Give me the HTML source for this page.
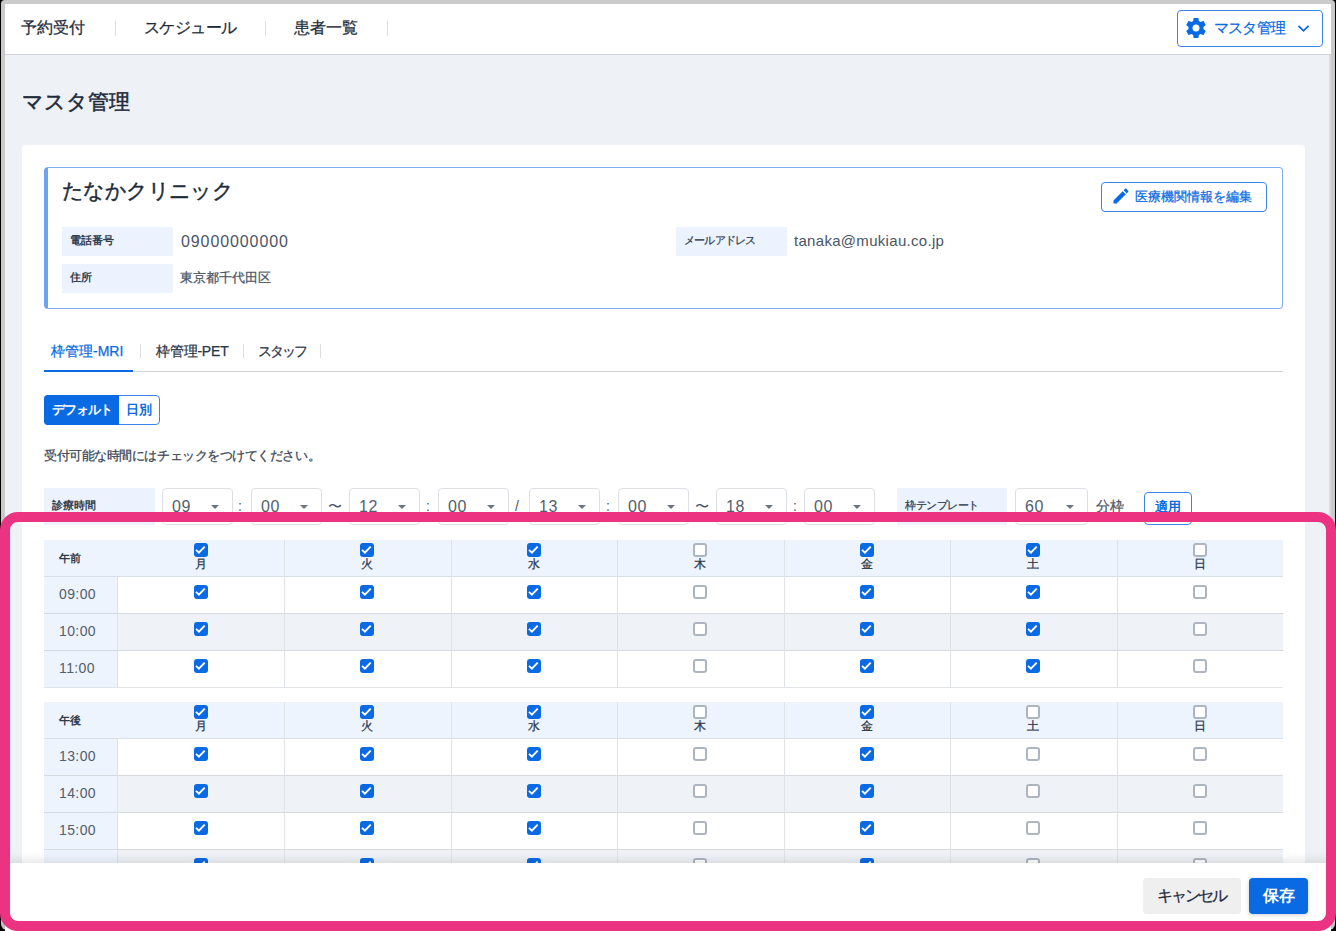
<!DOCTYPE html>
<html><head><meta charset="utf-8"><style>
*{box-sizing:border-box;margin:0;padding:0}
html,body{width:1336px;height:931px;overflow:hidden;background:#000;font-family:"Liberation Sans",sans-serif;color:#1e2b3b}
body{position:relative}
.a{position:absolute;white-space:nowrap}
.s{-webkit-text-stroke:0.25px currentColor}
.sel{position:absolute;top:488px;width:71px;height:37px;border:1px solid #dcdfe4;border-radius:4px;background:#fff}
.sel span{position:absolute;left:9px;top:8px;font-size:16px;line-height:20px;color:#535e6e;letter-spacing:0.5px}
.sel i{position:absolute;right:13px;top:16px;width:0;height:0;border-left:4px solid transparent;border-right:4px solid transparent;border-top:4.5px solid #6b7585}
.sym{top:496px;font-size:14px;line-height:20px;color:#4a5566}
.cb{position:absolute;width:14px;height:14px;border:2px solid #adb5c1;border-radius:3px;background:#fff}
.cb.on{background:#0a6ae3;border:none}
.cb svg{position:absolute;left:0;top:0}
.dl{font-size:12px;line-height:14px;font-weight:normal;color:#2f3b4b;width:12px;text-align:center;-webkit-text-stroke:0.3px currentColor}
.tm{font-size:14px;line-height:20px;color:#525d6d;letter-spacing:0.4px}
</style></head><body>
<div class="a" style="left:1px;top:0px;width:1334px;height:930px;background:#cacaca;border-radius:4px 4px 6px 6px"></div>
<div class="a" style="left:5px;top:4px;width:1324px;height:922px;background:#eef1f6;"></div>
<div class="a" style="left:1329px;top:55px;width:2px;height:875px;background:#dadada;"></div>
<div class="a" style="left:5px;top:4px;width:1326px;height:51px;background:#fff;border-bottom:1px solid #cfd2d6"></div>
<div class="a s" style="left:21px;top:17px;font-size:16px;line-height:22px;font-weight:normal;color:#1e2b3b;letter-spacing:0px;">予約受付</div>
<div class="a" style="left:115px;top:21px;width:1px;height:15px;background:#dedede;"></div>
<div class="a s" style="left:144px;top:17px;font-size:16px;line-height:22px;font-weight:normal;color:#1e2b3b;letter-spacing:-0.6px;">スケジュール</div>
<div class="a" style="left:265px;top:21px;width:1px;height:15px;background:#dedede;"></div>
<div class="a s" style="left:294px;top:17px;font-size:16px;line-height:22px;font-weight:normal;color:#1e2b3b;letter-spacing:0px;">患者一覧</div>
<div class="a" style="left:387px;top:21px;width:1px;height:15px;background:#dedede;"></div>
<div class="a" style="left:1177px;top:10px;width:146px;height:37px;background:#fff;border:1px solid #3d84ec;border-radius:4px"></div>
<svg class="a" style="left:1186px;top:18px" width="20" height="20" viewBox="2 2 20 20"><path fill="#0a6ae3" d="M12,15.5A3.5,3.5 0 0,1 8.5,12A3.5,3.5 0 0,1 12,8.5A3.5,3.5 0 0,1 15.5,12A3.5,3.5 0 0,1 12,15.5M19.43,12.97C19.47,12.65 19.5,12.33 19.5,12C19.5,11.67 19.47,11.34 19.43,11L21.54,9.37C21.73,9.22 21.78,8.95 21.66,8.73L19.66,5.27C19.54,5.05 19.27,4.96 19.05,5.05L16.56,6.05C16.04,5.66 15.5,5.32 14.87,5.07L14.5,2.42C14.46,2.18 14.25,2 14,2H10C9.75,2 9.54,2.18 9.5,2.42L9.13,5.07C8.5,5.32 7.96,5.66 7.44,6.05L4.95,5.05C4.73,4.96 4.46,5.05 4.34,5.27L2.34,8.73C2.21,8.95 2.27,9.22 2.46,9.37L4.57,11C4.53,11.34 4.5,11.67 4.5,12C4.5,12.33 4.53,12.65 4.57,12.97L2.46,14.63C2.27,14.78 2.21,15.05 2.34,15.27L4.34,18.73C4.46,18.95 4.73,19.03 4.95,18.95L7.44,17.94C7.96,18.34 8.5,18.68 9.13,18.93L9.5,21.58C9.54,21.82 9.75,22 10,22H14C14.25,22 14.46,21.82 14.5,21.58L14.87,18.93C15.5,18.67 16.04,18.34 16.56,17.94L19.05,18.95C19.27,19.03 19.54,18.95 19.66,18.73L21.66,15.27C21.78,15.05 21.73,14.78 21.54,14.63L19.43,12.97Z"/></svg>
<div class="a s" style="left:1214px;top:17px;font-size:15px;line-height:22px;font-weight:normal;color:#0a6ae3;letter-spacing:-0.8px;">マスタ管理</div>
<svg class="a" style="left:1297px;top:24px" width="13" height="9" viewBox="0 0 13 9"><path d="M1.5 1.8 L6.5 6.8 L11.5 1.8" fill="none" stroke="#0a6ae3" stroke-width="1.8"/></svg>
<div class="a s" style="left:22px;top:87px;font-size:21px;line-height:30px;font-weight:normal;color:#1e2b3b;letter-spacing:0px;-webkit-text-stroke:0.5px #1e2b3b">マスタ管理</div>
<div class="a" style="left:22px;top:145px;width:1283px;height:800px;background:#fff;border-radius:4px"></div>
<div class="a" style="left:44px;top:167px;width:1239px;height:142px;background:transparent;border:1px solid #7eadf0;border-left:4px solid #6ea3ee;border-radius:4px"></div>
<div class="a s" style="left:62px;top:176px;font-size:21px;line-height:30px;font-weight:normal;color:#1e2b3b;letter-spacing:-0.6px;-webkit-text-stroke:0.45px #1e2b3b">たなかクリニック</div>
<div class="a" style="left:1101px;top:182px;width:166px;height:30px;background:#fff;border:1px solid #3d84ec;border-radius:4px"></div>
<svg class="a" style="left:1111px;top:186px" width="20" height="20" viewBox="0 0 24 24"><path fill="#0a6ae3" d="M3 17.25V21h3.75L17.81 9.94l-3.75-3.75L3 17.25zM20.71 7.04c.39-.39.39-1.02 0-1.41l-2.34-2.34a.996.996 0 0 0-1.41 0l-1.83 1.83 3.75 3.75 1.83-1.83z"/></svg>
<div class="a s" style="left:1135px;top:187px;font-size:13px;line-height:20px;font-weight:normal;color:#0a6ae3;letter-spacing:0px;">医療機関情報を編集</div>
<div class="a" style="left:62px;top:227px;width:111px;height:29px;background:#ecf3fe;"></div>
<div class="a" style="left:70px;top:231px;font-size:11px;line-height:18px;font-weight:bold;color:#333f50;letter-spacing:0px;">電話番号</div>
<div class="a" style="left:181px;top:232px;font-size:16px;line-height:20px;font-weight:normal;color:#4a5566;letter-spacing:0.9px;">09000000000</div>
<div class="a" style="left:62px;top:264px;width:111px;height:29px;background:#ecf3fe;"></div>
<div class="a" style="left:70px;top:268px;font-size:11px;line-height:18px;font-weight:bold;color:#333f50;letter-spacing:0px;">住所</div>
<div class="a s" style="left:180px;top:268px;font-size:13px;line-height:20px;font-weight:normal;color:#4a5566;letter-spacing:0px;">東京都千代田区</div>
<div class="a" style="left:676px;top:227px;width:111px;height:29px;background:#ecf3fe;"></div>
<div class="a s" style="left:684px;top:231px;font-size:11px;line-height:18px;font-weight:normal;color:#333f50;letter-spacing:-0.8px;">メールアドレス</div>
<div class="a" style="left:794px;top:231px;font-size:15px;line-height:20px;font-weight:normal;color:#4a5566;letter-spacing:0.3px;">tanaka@mukiau.co.jp</div>
<div class="a s" style="left:51px;top:341px;font-size:14px;line-height:20px;font-weight:normal;color:#0a6ae3;letter-spacing:0px;">枠管理-MRI</div>
<div class="a" style="left:140px;top:344px;width:1px;height:14px;background:#dedede;"></div>
<div class="a s" style="left:156px;top:341px;font-size:14px;line-height:20px;font-weight:normal;color:#2a3646;letter-spacing:-0.2px;">枠管理-PET</div>
<div class="a" style="left:243px;top:344px;width:1px;height:14px;background:#dedede;"></div>
<div class="a s" style="left:258px;top:341px;font-size:14px;line-height:20px;font-weight:normal;color:#2a3646;letter-spacing:-2px;">スタッフ</div>
<div class="a" style="left:320px;top:344px;width:1px;height:14px;background:#dedede;"></div>
<div class="a" style="left:44px;top:371px;width:1239px;height:1px;background:#cfd3d8;"></div>
<div class="a" style="left:44px;top:370px;width:89px;height:2px;background:#0a6ae3;"></div>
<div class="a" style="left:44px;top:395px;width:116px;height:30px;background:#fff;border:1px solid #3d84ec;border-radius:4px"></div>
<div class="a" style="left:44px;top:395px;width:75px;height:30px;background:#0a6ae3;border-radius:4px 0 0 4px"></div>
<div class="a" style="left:52px;top:400px;font-size:13px;line-height:20px;font-weight:bold;color:#fff;letter-spacing:-1px;">デフォルト</div>
<div class="a" style="left:126px;top:400px;font-size:13px;line-height:20px;font-weight:bold;color:#0a6ae3;letter-spacing:0px;">日別</div>
<div class="a s" style="left:44px;top:446px;font-size:13px;line-height:20px;font-weight:normal;color:#3a4656;letter-spacing:-0.45px;">受付可能な時間にはチェックをつけてください。</div>
<div class="a" style="left:44px;top:488px;width:111px;height:37px;background:#ecf3fe;"></div>
<div class="a" style="left:52px;top:496px;font-size:11px;line-height:18px;font-weight:bold;color:#333f50;letter-spacing:0px;">診療時間</div>
<div class="sel" style="left:162px"><span>09</span><i></i></div>
<div class="sel" style="left:251px"><span>00</span><i></i></div>
<div class="sel" style="left:349px"><span>12</span><i></i></div>
<div class="sel" style="left:438px"><span>00</span><i></i></div>
<div class="sel" style="left:529px"><span>13</span><i></i></div>
<div class="sel" style="left:618px"><span>00</span><i></i></div>
<div class="sel" style="left:716px"><span>18</span><i></i></div>
<div class="sel" style="left:804px"><span>00</span><i></i></div>
<div class="a sym" style="left:238px">:</div>
<div class="a sym" style="left:328px">〜</div>
<div class="a sym" style="left:426px">:</div>
<div class="a sym" style="left:515px">/</div>
<div class="a sym" style="left:606px">:</div>
<div class="a sym" style="left:695px">〜</div>
<div class="a sym" style="left:793px">:</div>
<div class="a" style="left:897px;top:488px;width:110px;height:37px;background:#ecf3fe;"></div>
<div class="a s" style="left:905px;top:496px;font-size:11px;line-height:18px;font-weight:normal;color:#333f50;letter-spacing:-0.5px;">枠テンプレート</div>
<div class="sel" style="left:1015px;width:73px"><span>60</span><i></i></div>
<div class="a s" style="left:1096px;top:496px;font-size:14px;line-height:20px;font-weight:normal;color:#4a5566;letter-spacing:0px;">分枠</div>
<div class="a" style="left:1144px;top:492px;width:48px;height:33px;background:#fff;border:1px solid #3d84ec;border-radius:4px"></div>
<div class="a" style="left:1155px;top:497px;font-size:13px;line-height:20px;font-weight:bold;color:#0a6ae3;letter-spacing:0px;">適用</div>
<div class="a" style="left:44px;top:540px;width:1239px;height:37px;background:#eef4fe;border-bottom:1px solid #d9dfe8"></div>
<div class="a" style="left:59px;top:549px;font-size:11px;line-height:18px;font-weight:bold;color:#2f3b4b;letter-spacing:0px;">午前</div>
<div class="cb on" style="left:193.9px;top:543px"><svg width="14" height="14" viewBox="0 0 14 14"><path d="M2.0 6.9 L4.9 9.7 L10.7 3.7" fill="none" stroke="#fff" stroke-width="1.9"/></svg></div>
<div class="a dl" style="left:194.9px;top:557px">月</div>
<div class="cb on" style="left:360.4px;top:543px"><svg width="14" height="14" viewBox="0 0 14 14"><path d="M2.0 6.9 L4.9 9.7 L10.7 3.7" fill="none" stroke="#fff" stroke-width="1.9"/></svg></div>
<div class="a dl" style="left:361.4px;top:557px">火</div>
<div class="cb on" style="left:526.9px;top:543px"><svg width="14" height="14" viewBox="0 0 14 14"><path d="M2.0 6.9 L4.9 9.7 L10.7 3.7" fill="none" stroke="#fff" stroke-width="1.9"/></svg></div>
<div class="a dl" style="left:527.9px;top:557px">水</div>
<div class="cb" style="left:693.4px;top:543px"></div>
<div class="a dl" style="left:694.4px;top:557px">木</div>
<div class="cb on" style="left:859.9px;top:543px"><svg width="14" height="14" viewBox="0 0 14 14"><path d="M2.0 6.9 L4.9 9.7 L10.7 3.7" fill="none" stroke="#fff" stroke-width="1.9"/></svg></div>
<div class="a dl" style="left:860.9px;top:557px">金</div>
<div class="cb on" style="left:1026.3px;top:543px"><svg width="14" height="14" viewBox="0 0 14 14"><path d="M2.0 6.9 L4.9 9.7 L10.7 3.7" fill="none" stroke="#fff" stroke-width="1.9"/></svg></div>
<div class="a dl" style="left:1027.3px;top:557px">土</div>
<div class="cb" style="left:1192.8px;top:543px"></div>
<div class="a dl" style="left:1193.8px;top:557px">日</div>
<div class="a" style="left:117px;top:577px;width:1166px;height:37px;background:#fff;"></div>
<div class="a" style="left:44px;top:577px;width:74px;height:37px;background:#eef4fe;"></div>
<div class="a tm" style="left:59px;top:584px">09:00</div>
<div class="cb on" style="left:193.9px;top:585px"><svg width="14" height="14" viewBox="0 0 14 14"><path d="M2.0 6.9 L4.9 9.7 L10.7 3.7" fill="none" stroke="#fff" stroke-width="1.9"/></svg></div>
<div class="cb on" style="left:360.4px;top:585px"><svg width="14" height="14" viewBox="0 0 14 14"><path d="M2.0 6.9 L4.9 9.7 L10.7 3.7" fill="none" stroke="#fff" stroke-width="1.9"/></svg></div>
<div class="cb on" style="left:526.9px;top:585px"><svg width="14" height="14" viewBox="0 0 14 14"><path d="M2.0 6.9 L4.9 9.7 L10.7 3.7" fill="none" stroke="#fff" stroke-width="1.9"/></svg></div>
<div class="cb" style="left:693.4px;top:585px"></div>
<div class="cb on" style="left:859.9px;top:585px"><svg width="14" height="14" viewBox="0 0 14 14"><path d="M2.0 6.9 L4.9 9.7 L10.7 3.7" fill="none" stroke="#fff" stroke-width="1.9"/></svg></div>
<div class="cb on" style="left:1026.3px;top:585px"><svg width="14" height="14" viewBox="0 0 14 14"><path d="M2.0 6.9 L4.9 9.7 L10.7 3.7" fill="none" stroke="#fff" stroke-width="1.9"/></svg></div>
<div class="cb" style="left:1192.8px;top:585px"></div>
<div class="a" style="left:44px;top:613px;width:1239px;height:2px;background:#d6d9de;"></div>
<div class="a" style="left:117px;top:614px;width:1166px;height:37px;background:#eff2f6;"></div>
<div class="a" style="left:44px;top:614px;width:74px;height:37px;background:#eef4fe;"></div>
<div class="a tm" style="left:59px;top:621px">10:00</div>
<div class="cb on" style="left:193.9px;top:622px"><svg width="14" height="14" viewBox="0 0 14 14"><path d="M2.0 6.9 L4.9 9.7 L10.7 3.7" fill="none" stroke="#fff" stroke-width="1.9"/></svg></div>
<div class="cb on" style="left:360.4px;top:622px"><svg width="14" height="14" viewBox="0 0 14 14"><path d="M2.0 6.9 L4.9 9.7 L10.7 3.7" fill="none" stroke="#fff" stroke-width="1.9"/></svg></div>
<div class="cb on" style="left:526.9px;top:622px"><svg width="14" height="14" viewBox="0 0 14 14"><path d="M2.0 6.9 L4.9 9.7 L10.7 3.7" fill="none" stroke="#fff" stroke-width="1.9"/></svg></div>
<div class="cb" style="left:693.4px;top:622px"></div>
<div class="cb on" style="left:859.9px;top:622px"><svg width="14" height="14" viewBox="0 0 14 14"><path d="M2.0 6.9 L4.9 9.7 L10.7 3.7" fill="none" stroke="#fff" stroke-width="1.9"/></svg></div>
<div class="cb on" style="left:1026.3px;top:622px"><svg width="14" height="14" viewBox="0 0 14 14"><path d="M2.0 6.9 L4.9 9.7 L10.7 3.7" fill="none" stroke="#fff" stroke-width="1.9"/></svg></div>
<div class="cb" style="left:1192.8px;top:622px"></div>
<div class="a" style="left:44px;top:650px;width:1239px;height:2px;background:#d6d9de;"></div>
<div class="a" style="left:117px;top:651px;width:1166px;height:37px;background:#fff;"></div>
<div class="a" style="left:44px;top:651px;width:74px;height:37px;background:#eef4fe;"></div>
<div class="a tm" style="left:59px;top:658px">11:00</div>
<div class="cb on" style="left:193.9px;top:659px"><svg width="14" height="14" viewBox="0 0 14 14"><path d="M2.0 6.9 L4.9 9.7 L10.7 3.7" fill="none" stroke="#fff" stroke-width="1.9"/></svg></div>
<div class="cb on" style="left:360.4px;top:659px"><svg width="14" height="14" viewBox="0 0 14 14"><path d="M2.0 6.9 L4.9 9.7 L10.7 3.7" fill="none" stroke="#fff" stroke-width="1.9"/></svg></div>
<div class="cb on" style="left:526.9px;top:659px"><svg width="14" height="14" viewBox="0 0 14 14"><path d="M2.0 6.9 L4.9 9.7 L10.7 3.7" fill="none" stroke="#fff" stroke-width="1.9"/></svg></div>
<div class="cb" style="left:693.4px;top:659px"></div>
<div class="cb on" style="left:859.9px;top:659px"><svg width="14" height="14" viewBox="0 0 14 14"><path d="M2.0 6.9 L4.9 9.7 L10.7 3.7" fill="none" stroke="#fff" stroke-width="1.9"/></svg></div>
<div class="cb on" style="left:1026.3px;top:659px"><svg width="14" height="14" viewBox="0 0 14 14"><path d="M2.0 6.9 L4.9 9.7 L10.7 3.7" fill="none" stroke="#fff" stroke-width="1.9"/></svg></div>
<div class="cb" style="left:1192.8px;top:659px"></div>
<div class="a" style="left:44px;top:687px;width:1239px;height:1px;background:#e1e4e8;"></div>
<div class="a" style="left:284px;top:540px;width:1px;height:148px;background:#dfe2e6;"></div>
<div class="a" style="left:451px;top:540px;width:1px;height:148px;background:#dfe2e6;"></div>
<div class="a" style="left:617px;top:540px;width:1px;height:148px;background:#dfe2e6;"></div>
<div class="a" style="left:784px;top:540px;width:1px;height:148px;background:#dfe2e6;"></div>
<div class="a" style="left:950px;top:540px;width:1px;height:148px;background:#dfe2e6;"></div>
<div class="a" style="left:1117px;top:540px;width:1px;height:148px;background:#dfe2e6;"></div>
<div class="a" style="left:117px;top:577px;width:1px;height:111px;background:#dfe2e6;"></div>
<div class="a" style="left:44px;top:702px;width:1239px;height:37px;background:#eef4fe;border-bottom:1px solid #d9dfe8"></div>
<div class="a" style="left:59px;top:711px;font-size:11px;line-height:18px;font-weight:bold;color:#2f3b4b;letter-spacing:0px;">午後</div>
<div class="cb on" style="left:193.9px;top:705px"><svg width="14" height="14" viewBox="0 0 14 14"><path d="M2.0 6.9 L4.9 9.7 L10.7 3.7" fill="none" stroke="#fff" stroke-width="1.9"/></svg></div>
<div class="a dl" style="left:194.9px;top:719px">月</div>
<div class="cb on" style="left:360.4px;top:705px"><svg width="14" height="14" viewBox="0 0 14 14"><path d="M2.0 6.9 L4.9 9.7 L10.7 3.7" fill="none" stroke="#fff" stroke-width="1.9"/></svg></div>
<div class="a dl" style="left:361.4px;top:719px">火</div>
<div class="cb on" style="left:526.9px;top:705px"><svg width="14" height="14" viewBox="0 0 14 14"><path d="M2.0 6.9 L4.9 9.7 L10.7 3.7" fill="none" stroke="#fff" stroke-width="1.9"/></svg></div>
<div class="a dl" style="left:527.9px;top:719px">水</div>
<div class="cb" style="left:693.4px;top:705px"></div>
<div class="a dl" style="left:694.4px;top:719px">木</div>
<div class="cb on" style="left:859.9px;top:705px"><svg width="14" height="14" viewBox="0 0 14 14"><path d="M2.0 6.9 L4.9 9.7 L10.7 3.7" fill="none" stroke="#fff" stroke-width="1.9"/></svg></div>
<div class="a dl" style="left:860.9px;top:719px">金</div>
<div class="cb" style="left:1026.3px;top:705px"></div>
<div class="a dl" style="left:1027.3px;top:719px">土</div>
<div class="cb" style="left:1192.8px;top:705px"></div>
<div class="a dl" style="left:1193.8px;top:719px">日</div>
<div class="a" style="left:117px;top:739px;width:1166px;height:37px;background:#fff;"></div>
<div class="a" style="left:44px;top:739px;width:74px;height:37px;background:#eef4fe;"></div>
<div class="a tm" style="left:59px;top:746px">13:00</div>
<div class="cb on" style="left:193.9px;top:747px"><svg width="14" height="14" viewBox="0 0 14 14"><path d="M2.0 6.9 L4.9 9.7 L10.7 3.7" fill="none" stroke="#fff" stroke-width="1.9"/></svg></div>
<div class="cb on" style="left:360.4px;top:747px"><svg width="14" height="14" viewBox="0 0 14 14"><path d="M2.0 6.9 L4.9 9.7 L10.7 3.7" fill="none" stroke="#fff" stroke-width="1.9"/></svg></div>
<div class="cb on" style="left:526.9px;top:747px"><svg width="14" height="14" viewBox="0 0 14 14"><path d="M2.0 6.9 L4.9 9.7 L10.7 3.7" fill="none" stroke="#fff" stroke-width="1.9"/></svg></div>
<div class="cb" style="left:693.4px;top:747px"></div>
<div class="cb on" style="left:859.9px;top:747px"><svg width="14" height="14" viewBox="0 0 14 14"><path d="M2.0 6.9 L4.9 9.7 L10.7 3.7" fill="none" stroke="#fff" stroke-width="1.9"/></svg></div>
<div class="cb" style="left:1026.3px;top:747px"></div>
<div class="cb" style="left:1192.8px;top:747px"></div>
<div class="a" style="left:44px;top:775px;width:1239px;height:2px;background:#d6d9de;"></div>
<div class="a" style="left:117px;top:776px;width:1166px;height:37px;background:#eff2f6;"></div>
<div class="a" style="left:44px;top:776px;width:74px;height:37px;background:#eef4fe;"></div>
<div class="a tm" style="left:59px;top:783px">14:00</div>
<div class="cb on" style="left:193.9px;top:784px"><svg width="14" height="14" viewBox="0 0 14 14"><path d="M2.0 6.9 L4.9 9.7 L10.7 3.7" fill="none" stroke="#fff" stroke-width="1.9"/></svg></div>
<div class="cb on" style="left:360.4px;top:784px"><svg width="14" height="14" viewBox="0 0 14 14"><path d="M2.0 6.9 L4.9 9.7 L10.7 3.7" fill="none" stroke="#fff" stroke-width="1.9"/></svg></div>
<div class="cb on" style="left:526.9px;top:784px"><svg width="14" height="14" viewBox="0 0 14 14"><path d="M2.0 6.9 L4.9 9.7 L10.7 3.7" fill="none" stroke="#fff" stroke-width="1.9"/></svg></div>
<div class="cb" style="left:693.4px;top:784px"></div>
<div class="cb on" style="left:859.9px;top:784px"><svg width="14" height="14" viewBox="0 0 14 14"><path d="M2.0 6.9 L4.9 9.7 L10.7 3.7" fill="none" stroke="#fff" stroke-width="1.9"/></svg></div>
<div class="cb" style="left:1026.3px;top:784px"></div>
<div class="cb" style="left:1192.8px;top:784px"></div>
<div class="a" style="left:44px;top:812px;width:1239px;height:2px;background:#d6d9de;"></div>
<div class="a" style="left:117px;top:813px;width:1166px;height:37px;background:#fff;"></div>
<div class="a" style="left:44px;top:813px;width:74px;height:37px;background:#eef4fe;"></div>
<div class="a tm" style="left:59px;top:820px">15:00</div>
<div class="cb on" style="left:193.9px;top:821px"><svg width="14" height="14" viewBox="0 0 14 14"><path d="M2.0 6.9 L4.9 9.7 L10.7 3.7" fill="none" stroke="#fff" stroke-width="1.9"/></svg></div>
<div class="cb on" style="left:360.4px;top:821px"><svg width="14" height="14" viewBox="0 0 14 14"><path d="M2.0 6.9 L4.9 9.7 L10.7 3.7" fill="none" stroke="#fff" stroke-width="1.9"/></svg></div>
<div class="cb on" style="left:526.9px;top:821px"><svg width="14" height="14" viewBox="0 0 14 14"><path d="M2.0 6.9 L4.9 9.7 L10.7 3.7" fill="none" stroke="#fff" stroke-width="1.9"/></svg></div>
<div class="cb" style="left:693.4px;top:821px"></div>
<div class="cb on" style="left:859.9px;top:821px"><svg width="14" height="14" viewBox="0 0 14 14"><path d="M2.0 6.9 L4.9 9.7 L10.7 3.7" fill="none" stroke="#fff" stroke-width="1.9"/></svg></div>
<div class="cb" style="left:1026.3px;top:821px"></div>
<div class="cb" style="left:1192.8px;top:821px"></div>
<div class="a" style="left:44px;top:849px;width:1239px;height:2px;background:#d6d9de;"></div>
<div class="a" style="left:117px;top:850px;width:1166px;height:37px;background:#eff2f6;"></div>
<div class="a" style="left:44px;top:850px;width:74px;height:37px;background:#eef4fe;"></div>
<div class="cb on" style="left:193.9px;top:858px"><svg width="14" height="14" viewBox="0 0 14 14"><path d="M2.0 6.9 L4.9 9.7 L10.7 3.7" fill="none" stroke="#fff" stroke-width="1.9"/></svg></div>
<div class="cb on" style="left:360.4px;top:858px"><svg width="14" height="14" viewBox="0 0 14 14"><path d="M2.0 6.9 L4.9 9.7 L10.7 3.7" fill="none" stroke="#fff" stroke-width="1.9"/></svg></div>
<div class="cb on" style="left:526.9px;top:858px"><svg width="14" height="14" viewBox="0 0 14 14"><path d="M2.0 6.9 L4.9 9.7 L10.7 3.7" fill="none" stroke="#fff" stroke-width="1.9"/></svg></div>
<div class="cb" style="left:693.4px;top:858px"></div>
<div class="cb on" style="left:859.9px;top:858px"><svg width="14" height="14" viewBox="0 0 14 14"><path d="M2.0 6.9 L4.9 9.7 L10.7 3.7" fill="none" stroke="#fff" stroke-width="1.9"/></svg></div>
<div class="cb" style="left:1026.3px;top:858px"></div>
<div class="cb" style="left:1192.8px;top:858px"></div>
<div class="a" style="left:44px;top:886px;width:1239px;height:1px;background:#e1e4e8;"></div>
<div class="a" style="left:284px;top:702px;width:1px;height:185px;background:#dfe2e6;"></div>
<div class="a" style="left:451px;top:702px;width:1px;height:185px;background:#dfe2e6;"></div>
<div class="a" style="left:617px;top:702px;width:1px;height:185px;background:#dfe2e6;"></div>
<div class="a" style="left:784px;top:702px;width:1px;height:185px;background:#dfe2e6;"></div>
<div class="a" style="left:950px;top:702px;width:1px;height:185px;background:#dfe2e6;"></div>
<div class="a" style="left:1117px;top:702px;width:1px;height:185px;background:#dfe2e6;"></div>
<div class="a" style="left:117px;top:739px;width:1px;height:148px;background:#dfe2e6;"></div>
<div class="a" style="left:5px;top:863px;width:1326px;height:70px;background:#fff;box-shadow:0 -2px 10px rgba(0,0,0,0.12)"></div>
<div class="a" style="left:1143px;top:878px;width:98px;height:36px;background:#efefef;border-radius:4px"></div>
<div class="a s" style="left:1157px;top:885px;font-size:16px;line-height:22px;font-weight:normal;color:#1e2b3b;letter-spacing:-2.2px;">キャンセル</div>
<div class="a" style="left:1249px;top:878px;width:59px;height:36px;background:#0a6ae3;border-radius:4px;box-shadow:0 1px 4px rgba(0,0,0,0.2)"></div>
<div class="a" style="left:1263px;top:885px;font-size:16px;line-height:22px;font-weight:bold;color:#fff;letter-spacing:0px;">保存</div>
<div class="a" style="left:0px;top:512px;width:1336px;height:419px;background:transparent;border:10px solid #ec3382;border-radius:18px"></div>
</body></html>
